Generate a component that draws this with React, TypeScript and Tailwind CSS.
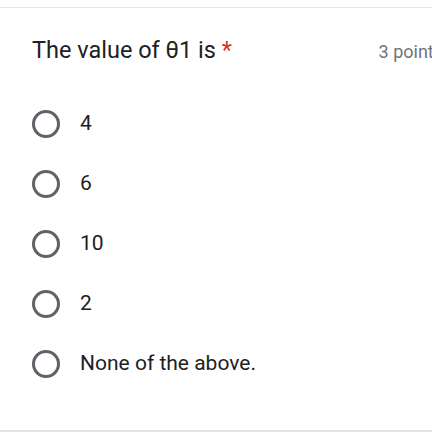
import React from "react"

const options = ["4", "6", "10", "2", "None of the above."]

export default function App() {
  return (
    <div className="w-[432px] h-[432px] bg-white overflow-hidden flex flex-col font-['Roboto','Liberation_Sans',sans-serif]">
      <div className="h-[7px] shrink-0" />
      <div className="flex-1 border-t border-[#e6e6e6] border-b-[2px] border-b-[#dfe4ea] flex flex-col">
        {/* Question header */}
        <div className="flex items-baseline justify-between pl-[32px] pt-[27px] whitespace-nowrap">
          <div className="text-[23.5px] leading-[30px] text-[#202124]">
            The value of θ1 is <span className="text-[#d93025]">*</span>
          </div>
          <div className="text-[18px] text-[#70757a] -mr-[11px]">3 points</div>
        </div>

        {/* Options */}
        <div className="flex flex-col pl-[32px] pt-[45px] gap-[32px]">
          {options.map((o) => (
            <div key={o} className="flex items-center h-[28px]">
              <div className="w-[28px] h-[28px] rounded-full border-[3px] border-[#5f6368] shrink-0" />
              <div className="ml-[20px] text-[21px] text-[#202124]">{o}</div>
            </div>
          ))}
        </div>
      </div>
    </div>
  )
}
